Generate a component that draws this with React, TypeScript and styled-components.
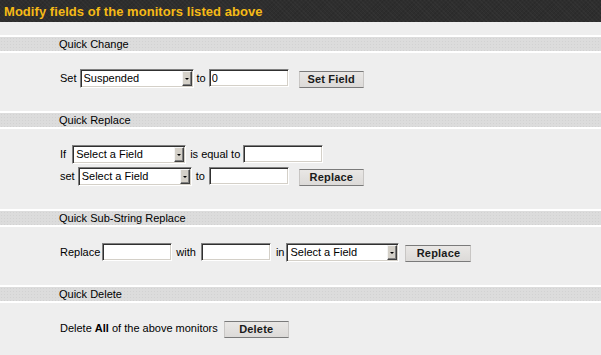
import React from "react";
import styled, { createGlobalStyle } from "styled-components";

const GlobalStyle = createGlobalStyle`
  html, body {
    margin: 0;
    padding: 0;
    background: #eeeeee;
  }
  body {
    font-family: "Liberation Sans", Arial, sans-serif;
    font-size: 11px;
    color: #000;
  }
`;

const Page = styled.div`
  width: 100%;
  min-height: 355px;
  background: #eeeeee;
`;

const TitleBar = styled.div`
  height: 22px;
  box-sizing: border-box;
  padding-left: 4px;
  display: flex;
  align-items: center;
  background-color: #2e2e2e;
  background-image: repeating-linear-gradient(
      45deg,
      rgba(255, 255, 255, 0.025) 0 1px,
      transparent 1px 3px
    ),
    repeating-linear-gradient(
      -45deg,
      rgba(0, 0, 0, 0.08) 0 1px,
      transparent 1px 3px
    );
`;

const Title = styled.h1`
  margin: 0;
  font-family: "Liberation Sans", Arial, sans-serif;
  font-size: 13px;
  font-weight: bold;
  color: #f6ba16;
  line-height: 22px;
  padding-top: 1px;
  letter-spacing: 0.05px;
`;

const TopGap = styled.div`
  height: 13px;
`;

const SectionHeader = styled.div`
  height: 14px;
  border-top: 2px solid #ffffff;
  border-bottom: 2px solid #ffffff;
  padding-left: 59px;
  line-height: 14px;
  font-size: 11px;
  color: #000;
  background-color: #dcdcdc;
  background-image: radial-gradient(#d2d2d2 0.6px, transparent 0.8px);
  background-size: 3px 3px;
`;

const SectionBody = styled.div`
  padding: 15px 0 23px 60px;
  display: flex;
  flex-direction: column;
  gap: 2px;
`;

const Row = styled.div`
  display: flex;
  align-items: center;
  height: 20px;
`;

const Label = styled.span<{ $ml?: number }>`
  margin-left: ${(p) => p.$ml ?? 0}px;
  font-size: 11px;
  line-height: 14px;
  white-space: nowrap;
  color: #000;
  b {
    font-weight: bold;
  }
`;

const SelectBox = styled.div<{ $ml?: number; $w?: number }>`
  margin-left: ${(p) => p.$ml ?? 0}px;
  width: ${(p) => p.$w ?? 114}px;
  height: 19px;
  box-sizing: border-box;
  display: flex;
  align-items: stretch;
  background: #ffffff;
  border: 1px solid;
  border-color: #808080 #ffffff #ffffff #808080;
  box-shadow: inset 1px 1px 0 #303030, inset -1px -1px 0 #d4d0c8;
  padding: 1px;
`;

const NativeSelect = styled.select`
  flex: 1;
  min-width: 0;
  appearance: none;
  -webkit-appearance: none;
  border: none;
  outline: none;
  background: transparent;
  font-family: "Liberation Sans", Arial, sans-serif;
  font-size: 11px;
  color: #000;
  padding: 0 0 0 2px;
  margin: 0;
  height: 100%;
`;

const ArrowButton = styled.span`
  width: 10px;
  box-sizing: border-box;
  display: flex;
  align-items: center;
  justify-content: center;
  background: #d4d0c8;
  border: 1px solid;
  border-color: #f4f4f4 #404040 #404040 #f4f4f4;
  box-shadow: inset -1px -1px 0 #808080;
`;

const ArrowGlyph = styled.span`
  width: 0;
  height: 0;
  border-left: 2px solid transparent;
  border-right: 2px solid transparent;
  border-top: 2px solid #000;
  margin-top: 1px;
`;

const TextField = styled.input<{ $ml?: number; $w?: number }>`
  margin-left: ${(p) => p.$ml ?? 0}px;
  width: ${(p) => p.$w ?? 80}px;
  height: 18px;
  box-sizing: border-box;
  border: 1px solid;
  border-color: #808080 #ffffff #ffffff #808080;
  box-shadow: inset 1px 1px 0 #303030, inset -1px -1px 0 #d4d0c8;
  background: #ffffff;
  font-family: "Liberation Sans", Arial, sans-serif;
  font-size: 11px;
  color: #000;
  padding: 0 2px;
  outline: none;
`;

const ActionButton = styled.button<{ $ml?: number; $w?: number }>`
  margin-left: ${(p) => p.$ml ?? 0}px;
  margin-top: 2px;
  width: ${(p) => p.$w ?? 65}px;
  height: 17px;
  box-sizing: border-box;
  padding: 0;
  border: 1px solid;
  border-color: #7a7a7a #c8c6c4 #7a7a7a #c8c6c4;
  background: linear-gradient(#e9e7e5, #dcdad8);
  font-family: "Liberation Sans", Arial, sans-serif;
  font-size: 11px;
  font-weight: bold;
  color: #1a1a1a;
  letter-spacing: 0.2px;
  cursor: pointer;
`;

type SelectProps = { value: string; ml?: number; w?: number };

const FieldSelect = ({ value, ml, w }: SelectProps) => (
  <SelectBox $ml={ml} $w={w}>
    <NativeSelect defaultValue={value}>
      <option>{value}</option>
    </NativeSelect>
    <ArrowButton>
      <ArrowGlyph />
    </ArrowButton>
  </SelectBox>
);

export default function App() {
  return (
    <Page>
      <GlobalStyle />
      <TitleBar>
        <Title>Modify fields of the monitors listed above</Title>
      </TitleBar>
      <TopGap />

      <SectionHeader>Quick Change</SectionHeader>
      <SectionBody>
        <Row>
          <Label>Set</Label>
          <FieldSelect value="Suspended" ml={3} />
          <Label $ml={3}>to</Label>
          <TextField $ml={3} defaultValue="0" />
          <ActionButton $ml={10}>Set Field</ActionButton>
        </Row>
      </SectionBody>

      <SectionHeader>Quick Replace</SectionHeader>
      <SectionBody>
        <Row>
          <Label>If</Label>
          <FieldSelect value="Select a Field" ml={6} />
          <Label $ml={4}>is equal to</Label>
          <TextField $ml={3} />
        </Row>
        <Row>
          <Label>set</Label>
          <FieldSelect value="Select a Field" ml={3} />
          <Label $ml={4}>to</Label>
          <TextField $ml={4} />
          <ActionButton $ml={10}>Replace</ActionButton>
        </Row>
      </SectionBody>

      <SectionHeader>Quick Sub-String Replace</SectionHeader>
      <SectionBody>
        <Row>
          <Label>Replace</Label>
          <TextField $ml={2} $w={70} />
          <Label $ml={4}>with</Label>
          <TextField $ml={5} $w={70} />
          <Label $ml={5}>in</Label>
          <FieldSelect value="Select a Field" ml={2} w={113} />
          <ActionButton $ml={6} $w={66}>
            Replace
          </ActionButton>
        </Row>
      </SectionBody>

      <SectionHeader>Quick Delete</SectionHeader>
      <SectionBody>
        <Row>
          <Label>
            Delete <b>All</b> of the above monitors
          </Label>
          <ActionButton $ml={6}>Delete</ActionButton>
        </Row>
      </SectionBody>
    </Page>
  );
}
